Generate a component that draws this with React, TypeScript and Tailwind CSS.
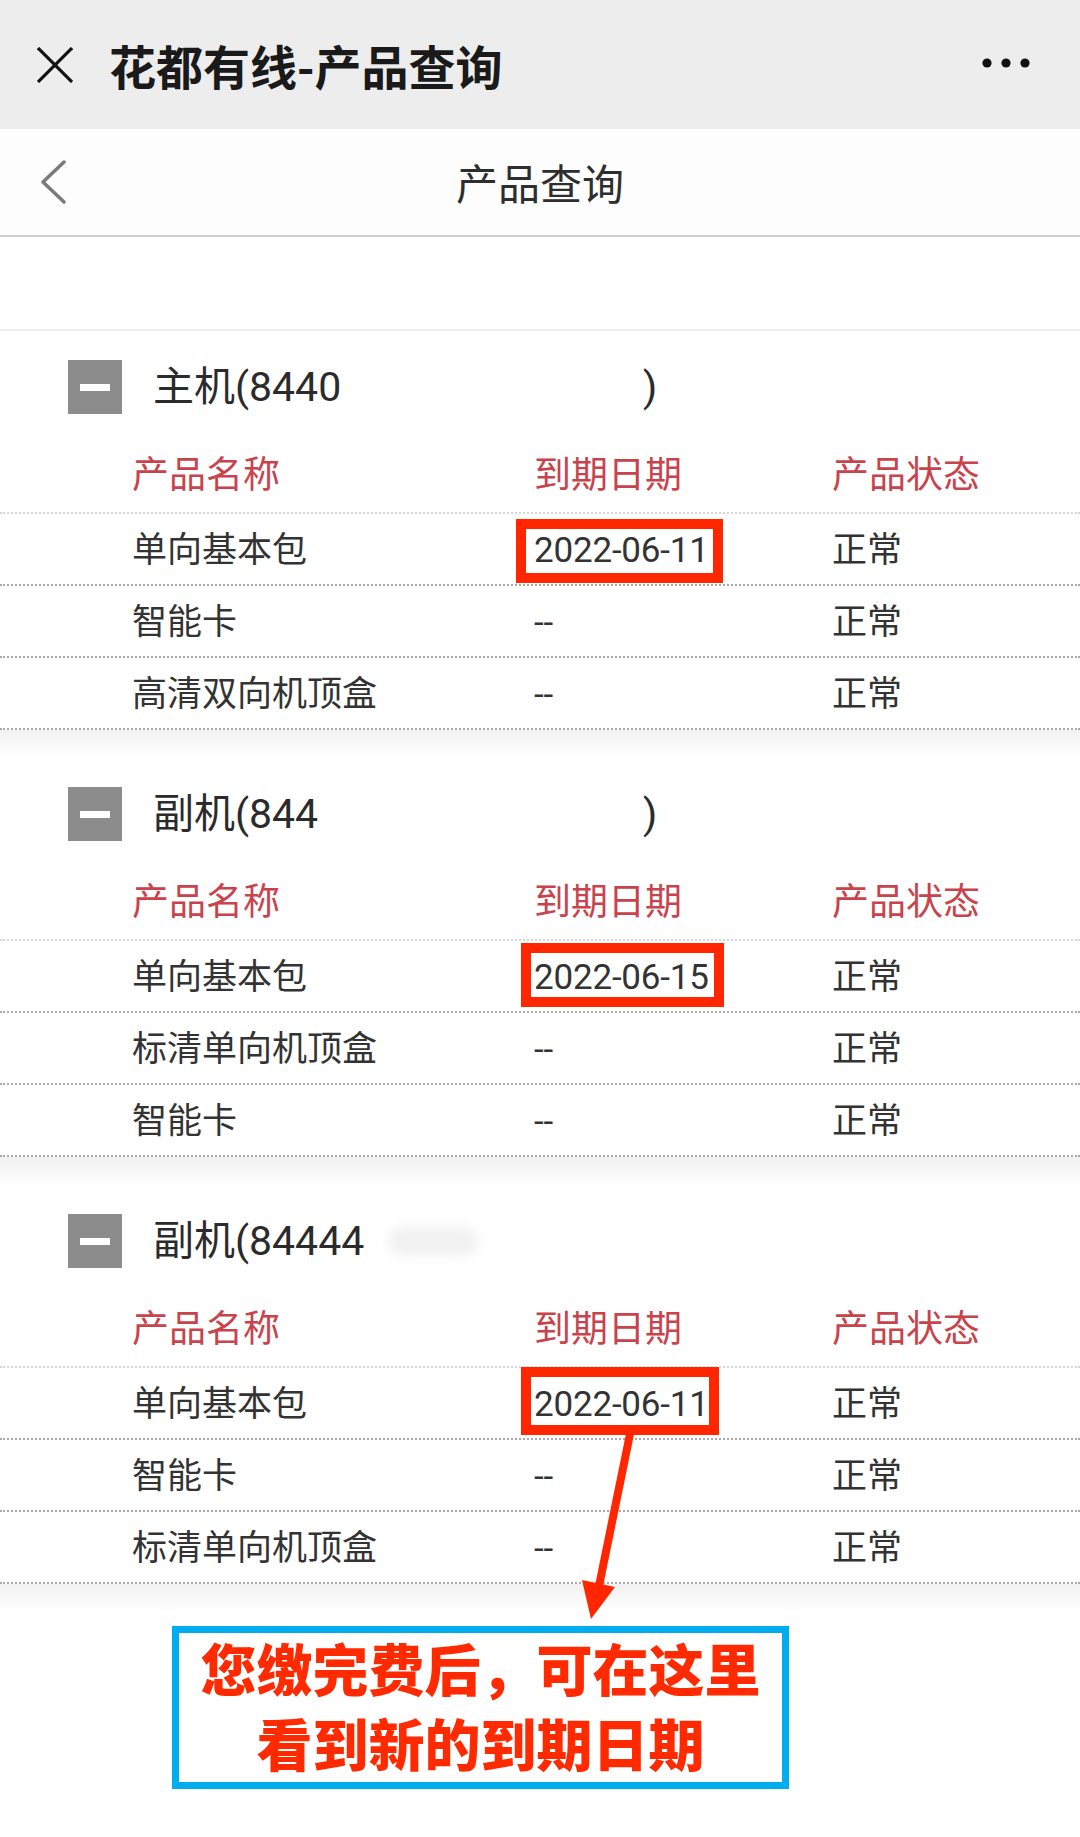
import React from "react";

type Row = { name: string; date: string; status: string };

type Box = { left: number; top: number; width: number; height: number };

type Section = {
  title: string;
  closing: boolean;
  rows: Row[];
  box: Box;
};

const SECTIONS: Section[] = [
  {
    title: "主机(8440",
    closing: true,
    rows: [
      { name: "单向基本包", date: "2022-06-11", status: "正常" },
      { name: "智能卡", date: "--", status: "正常" },
      { name: "高清双向机顶盒", date: "--", status: "正常" },
    ],
    box: { left: -18, top: 5, width: 207, height: 64 },
  },
  {
    title: "副机(844",
    closing: true,
    rows: [
      { name: "单向基本包", date: "2022-06-15", status: "正常" },
      { name: "标清单向机顶盒", date: "--", status: "正常" },
      { name: "智能卡", date: "--", status: "正常" },
    ],
    box: { left: -13, top: 2, width: 203, height: 64 },
  },
  {
    title: "副机(84444",
    closing: false,
    rows: [
      { name: "单向基本包", date: "2022-06-11", status: "正常" },
      { name: "智能卡", date: "--", status: "正常" },
      { name: "标清单向机顶盒", date: "--", status: "正常" },
    ],
    box: { left: -13, top: -1, width: 198, height: 68 },
  },
];

function ProductSection({ section }: { section: Section }) {
  return (
    <div>
      <div className="pt-[29px]">
        {/* title row */}
        <div className="flex h-[54px] items-center pl-[68px]">
          <div className="flex h-[54px] w-[54px] items-center justify-center bg-[#8c8c8c]">
            <div className="h-[7px] w-[30px] bg-white" />
          </div>
          <div className="ml-[31px] flex items-center text-[41px] leading-none text-[#2b2b2b]">
            <span className="relative w-[490px]">
              {section.title}
              {!section.closing && (
                <span className="absolute left-[235px] top-[6px] h-[28px] w-[90px] rounded-full bg-[#f1f1f1] blur-[6px]" />
              )}
            </span>
            {section.closing && <span>)</span>}
          </div>
        </div>

        {/* header */}
        <div className="mt-[20px] flex h-[80px] items-center border-b-2 border-dotted border-[#d6d6d6] pl-[132px] pt-[6px] text-[37px] text-[#c8434c]">
          <div className="w-[402px]">产品名称</div>
          <div className="w-[298px]">到期日期</div>
          <div>产品状态</div>
        </div>

        {section.rows.map((row, i) => (
          <div
            key={i}
            className="flex h-[72px] items-center border-b-2 border-dotted border-[#a9a9a9] pl-[132px] text-[35px] text-[#333333]"
          >
            <div className="w-[402px] pt-[5px]">{row.name}</div>
            <div className="relative flex h-full w-[298px] items-center">
              <span className="pt-[5px] tracking-[-0.2px]">{row.date}</span>
              {i === 0 && (
                <span
                  className="absolute border-[10px] border-[#ff2600]"
                  style={{
                    left: section.box.left,
                    top: section.box.top,
                    width: section.box.width,
                    height: section.box.height,
                  }}
                />
              )}
            </div>
            <div className="pt-[5px]">{row.status}</div>
          </div>
        ))}
      </div>
      <div className="h-[28px] bg-gradient-to-b from-[#f1f1f1] to-white" />
    </div>
  );
}

export default function App() {
  return (
    <div className="relative min-h-[1837px] w-[1080px] bg-white [font-family:'Roboto','Noto_Sans_CJK_SC',sans-serif]">
      {/* wechat top bar */}
      <div className="flex h-[129px] items-center bg-[#ededed] pl-[37px] pr-[50px]">
        <svg width="36" height="36" viewBox="0 0 36 36" className="mt-[1px]">
          <line x1="1" y1="1" x2="35" y2="35" stroke="#111" strokeWidth="3.2" />
          <line x1="35" y1="1" x2="1" y2="35" stroke="#111" strokeWidth="3.2" />
        </svg>
        <div className="ml-[36px] flex-1 text-[47px] font-bold leading-none text-[#1a1a1a] [font-family:'Noto_Sans_CJK_SC',sans-serif]">
          花都有线-产品查询
        </div>
        <svg width="48" height="10" viewBox="0 0 48 10" className="-mt-[4px]">
          <circle cx="5" cy="5" r="4.6" fill="#111" />
          <circle cx="24" cy="5" r="4.6" fill="#111" />
          <circle cx="43" cy="5" r="4.6" fill="#111" />
        </svg>
      </div>

      {/* page nav */}
      <div className="grid h-[108px] grid-cols-[1fr_auto_1fr] items-center border-b-2 border-[#cfcfcf] bg-[#fdfdfd]">
        <div className="pl-[40px]">
          <svg width="28" height="44" viewBox="0 0 28 44">
            <polyline points="24,2 3,22 24,42" fill="none" stroke="#7a7a7a" strokeWidth="3.5" strokeLinecap="round" strokeLinejoin="round" />
          </svg>
        </div>
        <div className="text-[42px] leading-none text-[#2e2e2e] [font-family:'Noto_Sans_CJK_SC',sans-serif]">
          产品查询
        </div>
        <div />
      </div>

      <div className="h-[92px]" />
      <div className="h-[2px] bg-[#ececec]" />

      {SECTIONS.map((s, i) => (
        <ProductSection key={i} section={s} />
      ))}

      {/* annotation */}
      <div className="ml-[172px] mt-[14px] flex h-[163px] w-[617px] flex-col items-center justify-center border-[7px] border-[#00aeef] pb-[8px] text-[56px] font-black leading-[75px] text-[#ff2a00] [font-family:'Noto_Sans_CJK_SC',sans-serif]">
        <div>您缴完费后，可在这里</div>
        <div>看到新的到期日期</div>
      </div>

      <svg className="pointer-events-none absolute left-0 top-0" width="1080" height="1837" viewBox="0 0 1080 1837">
        <line x1="630" y1="1434" x2="599" y2="1586" stroke="#ff2600" strokeWidth="8" />
        <polygon points="591,1619 615,1587 582,1580" fill="#ff2600" />
      </svg>
    </div>
  );
}
